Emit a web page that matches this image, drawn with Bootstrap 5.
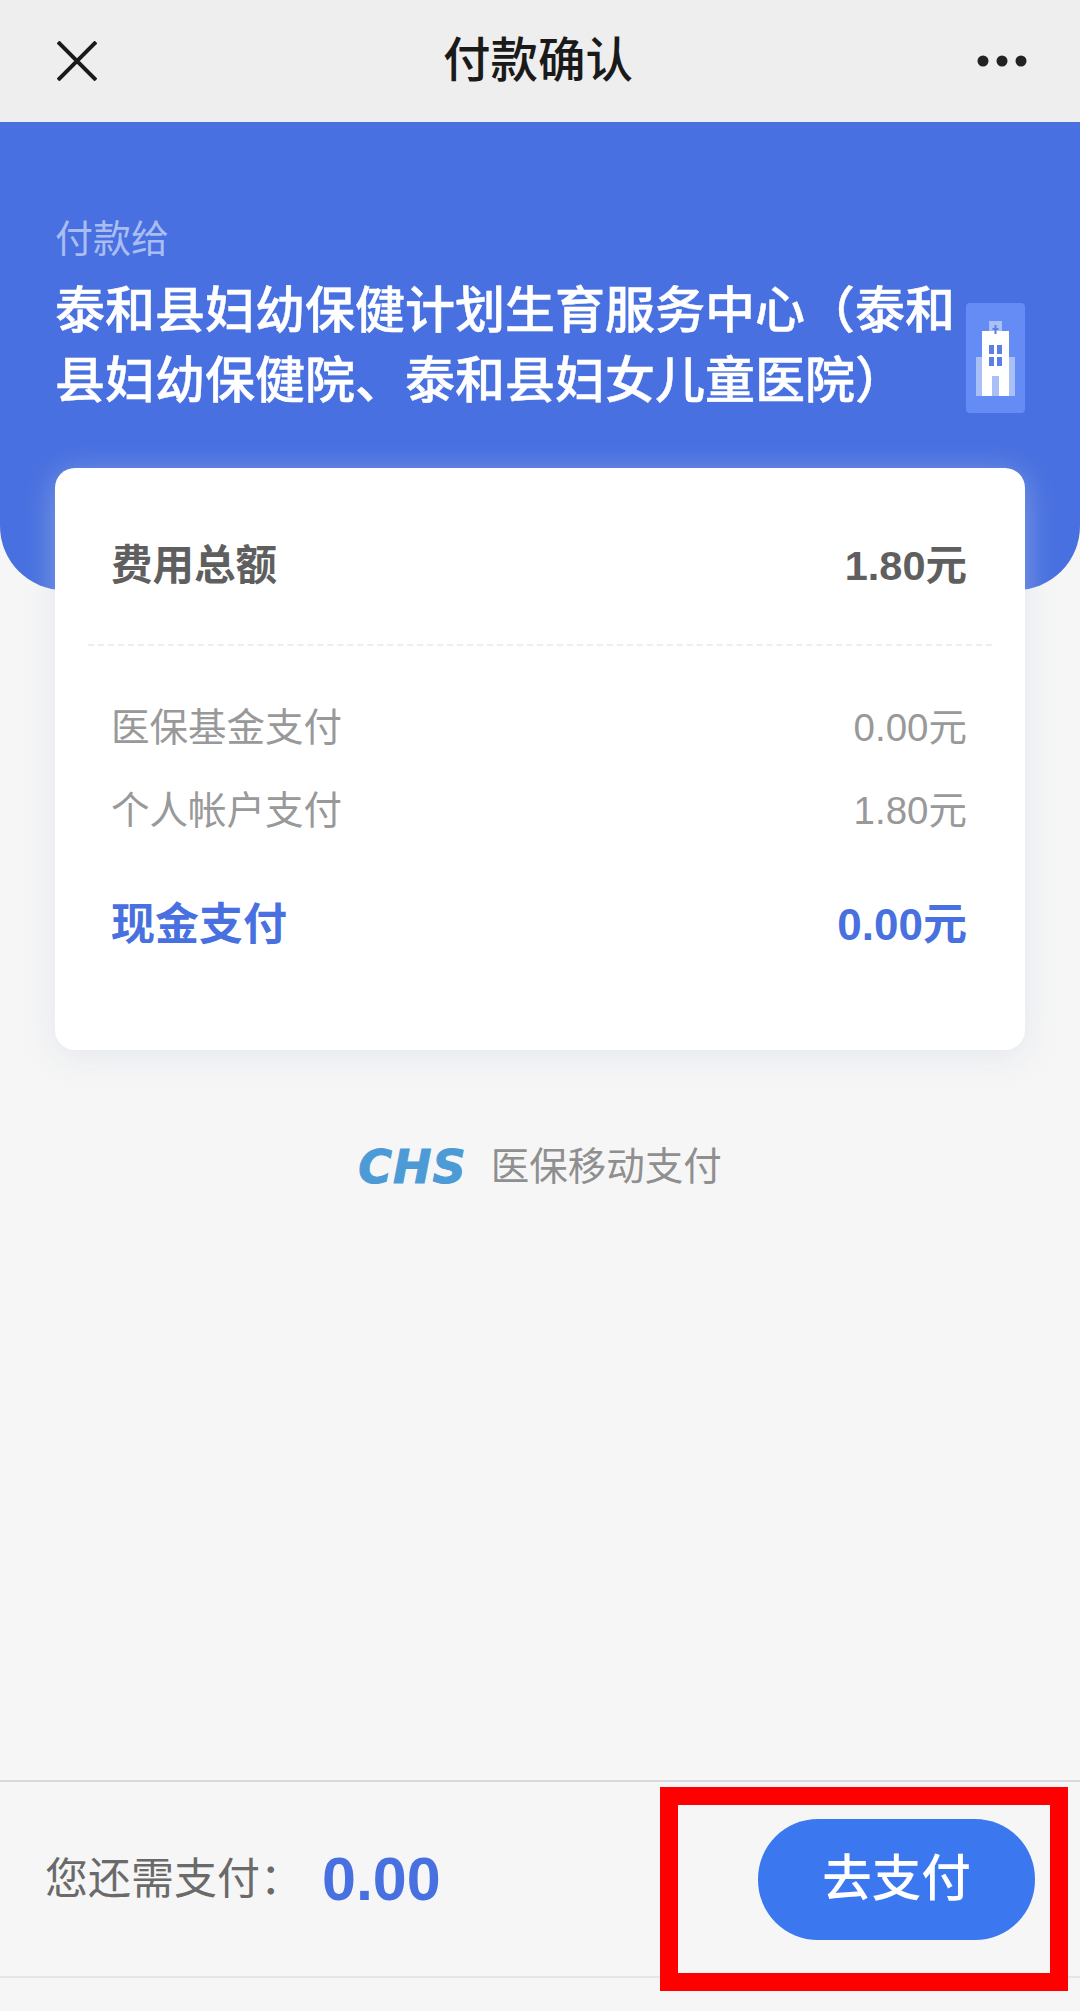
<!DOCTYPE html>
<html lang="zh-CN">
<head>
  <meta charset="UTF-8">
  <title>付款确认</title>
  <link href="https://cdn.jsdelivr.net/npm/bootstrap@5.3.0/dist/css/bootstrap.min.css" rel="stylesheet">
  <style>
    body { width: 1080px; height: 2011px; background: #f6f6f6; font-family: "Liberation Sans", "Noto Sans CJK SC", sans-serif; overflow: hidden; }
    .top-bar { height: 122px; background: #eeeeee; padding: 0 53px 0 57px; }
    .top-left { width: 105px; }
    .top-right { width: 113px; }
    .top-title { font-size: 47.5px; font-weight: 500; color: #1a1a1a; line-height: 1; }
    .hero { height: 468px; background: #4870e0; border-radius: 0 0 64px 64px; padding: 92px 55px 0; }
    .hero-label { font-size: 38px; line-height: 50px; color: #a9bdf3; }
    .hero-name { font-size: 50px; line-height: 70px; font-weight: 500; color: #fff; margin-top: 12px; width: 905px; -webkit-text-stroke: .5px #fff; }
    .hero-icon { width: 59px; height: 110px; background: #658bf5; border-radius: 4px; margin-top: 39px; }
    .pay-box { width: 970px; height: 582px; margin: -122px 0 0 55px; background: #fff; border-radius: 20px; box-shadow: 0 6px 32px rgba(205, 212, 230, .45); position: relative; padding: 0 58px 0 56px; }
    .pay-row { color: #999; font-size: 38.5px; line-height: 1; }
    .pay-total { color: #5f5f5f; font-size: 41.5px; font-weight: 700; height: 176px; padding-top: 20px; }
    .pay-rule { border-top: 2px dashed #eeeeee; margin: 0 -25px 0 -23px; }
    .pay-sub-a { margin-top: 63px; }
    .pay-sub-b { margin-top: 44px; }
    .pay-cash { color: #4870e0; font-size: 44px; font-weight: 700; margin-top: 73px; }
    .chs-line { margin-top: 99px; height: 36px; }
    .chs-name { color: #8f8f8f; font-size: 38.5px; line-height: 1; margin-left: 24px; }
    .chs-logo { font-family: "DejaVu Sans", sans-serif; font-weight: 700; font-style: italic; font-size: 46px; line-height: 1; letter-spacing: 1px; color: #4c9ad6; -webkit-text-stroke: 1px #4c9ad6; }
    .pay-bar { margin-top: auto; height: 198px; margin-bottom: 33px; border-top: 2px solid #d9d9d9; border-bottom: 2px solid #e6e6e6; padding: 0 45px 0 45px; position: relative; }
    .due-label { color: #6a6a6a; font-size: 43px; line-height: 1; }
    .due-amount { color: #4870e0; font-size: 61px; font-weight: 700; line-height: 1; margin-left: 19px; }
    .go-pay { width: 277px; height: 121px; background: #3b78f0; border: 0; border-radius: 60px; color: #fff; font-size: 49.5px; font-weight: 500; padding: 0; }
    .go-pay:hover { background: #3b78f0; color: #fff; }
    .red-mark { position: absolute; left: 660px; top: 1787px; width: 408px; height: 204px; border: 18px solid #ff0000; }
  </style>
</head>
<body class="d-flex flex-column position-relative m-0">
  <div class="top-bar d-flex align-items-center justify-content-between">
    <div class="top-left d-flex">
      <svg width="40" height="40" viewBox="0 0 40 40" fill="none" stroke="#1a1a1a" stroke-width="4"><path d="M1 1 39 39M39 1 1 39"/></svg>
    </div>
    <div class="top-title">付款确认</div>
    <div class="top-right d-flex justify-content-end">
      <svg width="50" height="12" viewBox="0 0 50 12" fill="#222"><circle cx="6" cy="6" r="5.5"/><circle cx="25" cy="6" r="5.5"/><circle cx="44" cy="6" r="5.5"/></svg>
    </div>
  </div>

  <div class="hero">
    <div class="hero-label">付款给</div>
    <div class="d-flex justify-content-between align-items-start">
      <div class="hero-name">泰和县妇幼保健计划生育服务中心（泰和县妇幼保健院、泰和县妇女儿童医院）</div>
      <div class="hero-icon">
        <svg width="59" height="110" viewBox="0 0 59 110">
          <rect x="10" y="54" width="39" height="39" fill="#a9bff8"/>
          <rect x="23" y="18" width="13" height="12" fill="#a9bff8"/>
          <rect x="16" y="28" width="27" height="65" fill="#fff"/>
          <path d="M29.5 22v9M26.5 26h6" stroke="#5c7fe6" stroke-width="2"/>
          <path d="M23 42h5v9h-5zM31 42h5v9h-5zM23 54h5v9h-5zM31 54h5v9h-5z" fill="#5c7fe6"/>
          <rect x="26" y="73" width="7" height="20" fill="#a9bff8"/>
        </svg>
      </div>
    </div>
  </div>

  <div class="pay-box">
    <div class="pay-row pay-total d-flex justify-content-between align-items-center"><span>费用总额</span><span>1.80元</span></div>
    <div class="pay-rule"></div>
    <div class="pay-row pay-sub-a d-flex justify-content-between"><span>医保基金支付</span><span>0.00元</span></div>
    <div class="pay-row pay-sub-b d-flex justify-content-between"><span>个人帐户支付</span><span>1.80元</span></div>
    <div class="pay-row pay-cash d-flex justify-content-between"><span>现金支付</span><span>0.00元</span></div>
  </div>

  <div class="chs-line d-flex justify-content-center align-items-center">
    <span class="chs-logo">CHS</span>
    <span class="chs-name">医保移动支付</span>
  </div>

  <div class="pay-bar d-flex align-items-center">
    <span class="due-label">您还需支付：</span>
    <span class="due-amount">0.00</span>
    <button type="button" class="btn go-pay ms-auto">去支付</button>
  </div>
  <div class="red-mark"></div>
</body>
</html>
